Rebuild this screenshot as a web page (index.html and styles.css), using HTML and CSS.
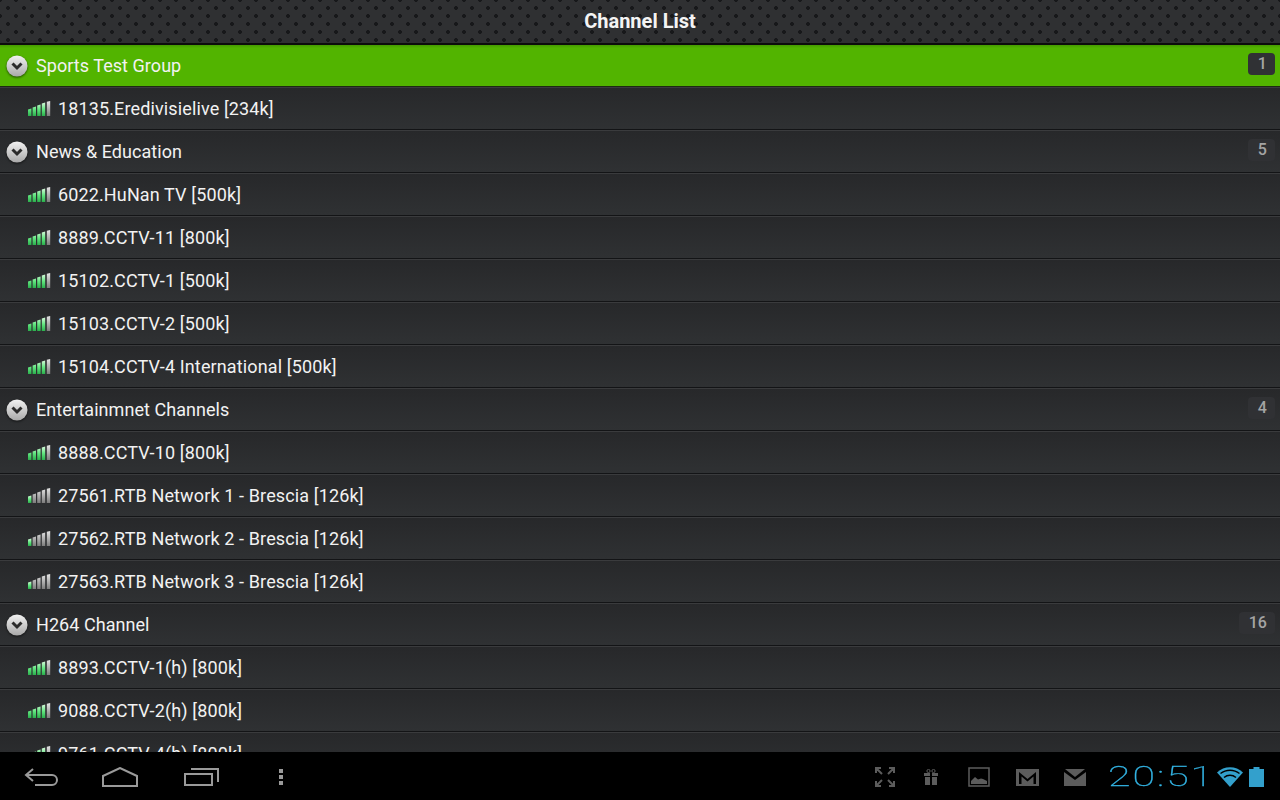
FILE: index.html
```html
<!DOCTYPE html>
<html lang="en">
<head>
  <meta charset="UTF-8" />
  <title>Channel List</title>
  <link rel="stylesheet" href="styles.css">
</head>
<body>

  <svg class="defs" width="0" height="0">
    <defs>
      <linearGradient id="barGreen" x1="0" y1="0" x2="0" y2="1">
        <stop offset="0" stop-color="#d6f7da"/>
        <stop offset="0.5" stop-color="#62e680"/>
        <stop offset="1" stop-color="#2aaf4c"/>
      </linearGradient>
      <linearGradient id="barGrey" x1="0" y1="0" x2="0" y2="1">
        <stop offset="0" stop-color="#e6e6e6"/>
        <stop offset="1" stop-color="#7c7c7c"/>
      </linearGradient>
      <linearGradient id="knob" x1="0" y1="0" x2="0" y2="1">
        <stop offset="0" stop-color="#f2f2f2"/>
        <stop offset="1" stop-color="#a9a9a9"/>
      </linearGradient>
      <symbol id="signal-good" viewBox="0 0 23 15">
        <path fill="url(#barGreen)" d="M0 8.500 3.400 7.500V15H0zM4.600 6.500 8 5.500V15H4.600zM9.200 4.500 12.600 3.500V15H9.200zM13.800 2.500 17.200 1.500V15h-3.400z"/>
        <path fill="url(#barGrey)" d="M18.800 0.700 22.200 0V15h-3.400z"/>
      </symbol>
      <symbol id="signal-poor" viewBox="0 0 23 15">
        <path fill="url(#barGreen)" d="M0 8.500 3.400 7.500V15H0z"/>
        <path fill="url(#barGrey)" d="M4.600 6.500 8 5.500V15H4.600zM9.200 4.500 12.600 3.500V15H9.200zM13.800 2.500 17.200 1.500V15h-3.400zM18.800 0.700 22.200 0V15h-3.400z"/>
      </symbol>
      <symbol id="chevron" viewBox="0 0 22 22">
        <circle cx="11" cy="11" r="10.500" fill="url(#knob)"/>
        <path d="M6.500 8.500 11 13l4.500-4.500" fill="none" stroke="#2b2b2b" stroke-width="3"/>
      </symbol>
    </defs>
  </svg>

  <div class="screen">
    <header class="titlebar">Channel List</header>

    <main class="list">
      <div class="row group active">
        <svg class="knob"><use href="#chevron"/></svg>
        <span class="name">Sports Test Group</span>
        <span class="count">1</span>
      </div>
      <div class="row"><svg class="signal"><use href="#signal-good"/></svg><span class="name">18135.Eredivisielive [234k]</span></div>

      <div class="row group">
        <svg class="knob"><use href="#chevron"/></svg>
        <span class="name">News &amp; Education</span>
        <span class="count">5</span>
      </div>
      <div class="row"><svg class="signal"><use href="#signal-good"/></svg><span class="name">6022.HuNan TV [500k]</span></div>
      <div class="row"><svg class="signal"><use href="#signal-good"/></svg><span class="name">8889.CCTV-11 [800k]</span></div>
      <div class="row"><svg class="signal"><use href="#signal-good"/></svg><span class="name">15102.CCTV-1 [500k]</span></div>
      <div class="row"><svg class="signal"><use href="#signal-good"/></svg><span class="name">15103.CCTV-2 [500k]</span></div>
      <div class="row"><svg class="signal"><use href="#signal-good"/></svg><span class="name">15104.CCTV-4 International [500k]</span></div>

      <div class="row group">
        <svg class="knob"><use href="#chevron"/></svg>
        <span class="name">Entertainmnet Channels</span>
        <span class="count">4</span>
      </div>
      <div class="row"><svg class="signal"><use href="#signal-good"/></svg><span class="name">8888.CCTV-10 [800k]</span></div>
      <div class="row"><svg class="signal"><use href="#signal-poor"/></svg><span class="name">27561.RTB Network 1 - Brescia [126k]</span></div>
      <div class="row"><svg class="signal"><use href="#signal-poor"/></svg><span class="name">27562.RTB Network 2 - Brescia [126k]</span></div>
      <div class="row"><svg class="signal"><use href="#signal-poor"/></svg><span class="name">27563.RTB Network 3 - Brescia [126k]</span></div>

      <div class="row group">
        <svg class="knob"><use href="#chevron"/></svg>
        <span class="name">H264 Channel</span>
        <span class="count">16</span>
      </div>
      <div class="row"><svg class="signal"><use href="#signal-good"/></svg><span class="name">8893.CCTV-1(h) [800k]</span></div>
      <div class="row"><svg class="signal"><use href="#signal-good"/></svg><span class="name">9088.CCTV-2(h) [800k]</span></div>
      <div class="row"><svg class="signal"><use href="#signal-good"/></svg><span class="name">9761.CCTV-4(h) [800k]</span></div>
    </main>

    <footer class="navbar">
      <div class="nav-left">
        <svg class="nav-back" width="34" height="20" viewBox="0 0 34 20"><path d="M9 2 2 8l7 6M2 8h26a4.500 4.500 0 0 1 0 10H11" fill="none" stroke="#9a9a9a" stroke-width="2"/></svg>
        <svg class="nav-home" width="36" height="20" viewBox="0 0 36 20"><path d="M1 9 18 1l17 8v10H1z" fill="none" stroke="#9a9a9a" stroke-width="2"/></svg>
        <svg class="nav-recent" width="35" height="18" viewBox="0 0 35 18"><path d="M1 6h27v11H1z" fill="none" stroke="#9a9a9a" stroke-width="2"/><path d="M7 1h27v13" fill="none" stroke="#9a9a9a" stroke-width="2"/></svg>
        <svg class="nav-menu" width="4" height="16" viewBox="0 0 4 16"><path fill="#9a9a9a" d="M0 0h4v4H0zM0 6h4v4H0zM0 12h4v4H0z"/></svg>
      </div>
      <div class="nav-right">
        <svg class="st-full" width="20" height="20" viewBox="0 0 20 20"><path d="M1 6V1h5M1 1l6 6M14 1h5v5M19 1l-6 6M1 14v5h5M1 19l6-6M14 19h5v-5M19 19l-6-6" fill="none" stroke="#5c5c5c" stroke-width="2"/></svg>
        <svg class="st-gift" width="14" height="16" viewBox="0 0 14 16"><path fill="#5c5c5c" d="M0 4h6v3H0zM8 4h6v3H8zM1 8h5v8H1zM8 8h5v8H8z"/><circle cx="4.500" cy="2" r="1.600" fill="none" stroke="#5c5c5c"/><circle cx="9.500" cy="2" r="1.600" fill="none" stroke="#5c5c5c"/></svg>
        <svg class="st-image" width="22" height="20" viewBox="0 0 22 20"><path d="M1 1h20v18H1z" fill="none" stroke="#5c5c5c" stroke-width="1.500"/><path fill="#5c5c5c" d="M3 17v-3l4-4 3 2.500 3-1 2 .5 4 2v3z"/></svg>
        <svg class="st-gmail" width="23" height="17" viewBox="0 0 23 17"><path fill="#5c5c5c" d="M0 0h23v17H0z"/><path fill="#000" d="M3 3 11.500 10 20 3v12h-2.500V7.500L11.500 12.500 5.500 7.500V15H3z"/></svg>
        <svg class="st-mail" width="22" height="17" viewBox="0 0 22 17"><path fill="#5c5c5c" d="M0 3 11 11 22 3v14H0zM1 0h20L11 8z"/></svg>
        <span class="clock-box"><span class="clock">20:51</span></span>
        <svg class="st-wifi" width="26" height="20" viewBox="0 0 26 20"><path fill="#33a0cc" d="M13 20 0 5.500C7 -1.500 19 -1.500 26 5.500z"/><path d="M3.500 6.500c5.500-4.500 13.500-4.500 19 0M7 10.500c3.500-3 8.500-3 12 0" fill="none" stroke="#000" stroke-width="1.500"/></svg>
        <svg class="st-batt" width="15" height="20" viewBox="0 0 15 20"><path fill="#33a0cc" d="M4.500 0h6v2H15v18H0V2h4.500z"/></svg>
      </div>
    </footer>
  </div>

</body>
</html>
```

FILE: styles.css
```css
* {
  box-sizing: border-box;
}
body {
  margin: 0;
  background-color: #000;
  font-family: Roboto, "Liberation Sans", sans-serif;
  color: #f2f2f2;
}
.defs {
  display: block;
  height: 0;
}
.screen {
  width: 1280px;
  height: 800px;
  display: flex;
  flex-direction: column;
  overflow: hidden;
}

.titlebar {
  height: 44px;
  flex: none;
  display: flex;
  align-items: center;
  justify-content: center;
  padding-bottom: 2px;
  background-color: #2f3032;
  background-image:
    radial-gradient(circle at 8px 8px, #17181a 1.7px, transparent 2.2px),
    radial-gradient(circle at 0 0, #17181a 1.7px, transparent 2.2px),
    radial-gradient(circle at 16px 0, #17181a 1.7px, transparent 2.2px),
    radial-gradient(circle at 0 16px, #17181a 1.7px, transparent 2.2px),
    radial-gradient(circle at 16px 16px, #17181a 1.7px, transparent 2.2px);
  background-size: 16px 16px;
  border-bottom: 1px solid #0c0c0c;
  font-size: 20px;
  font-weight: 700;
  color: #f4f4f4;
}

.list {
  flex: 1;
  min-height: 0;
  overflow: hidden;
  background-color: #2c2d2f;
}
.row {
  height: 43px;
  display: flex;
  align-items: center;
  padding-left: 28px;
  background-image: linear-gradient(#27282a, #2f3133);
  border-top: 1px solid #3a3b3d;
  border-bottom: 1px solid #131416;
  font-size: 18px;
  letter-spacing: 0.13px;
}
.row .name {
  margin-left: 7px;
}
.signal {
  width: 23px;
  height: 15px;
  flex: none;
}
.group {
  padding-left: 6px;
  padding-right: 5px;
  letter-spacing: 0.05px;
}
.group.active {
  background-image: linear-gradient(#469a00, #52b400 3px);
  border-top-color: #0c0c0c;
  border-bottom-color: #1d2a12;
}
.knob {
  width: 22px;
  height: 22px;
  flex: none;
  filter: drop-shadow(0 1px 1px rgba(0,0,0,0.6));
}
.group .name {
  margin-left: 8px;
}
.count {
  margin-left: auto;
  margin-top: -4px;
  min-width: 26px;
  height: 22px;
  padding: 0 8px 0 10px;
  display: flex;
  align-items: center;
  justify-content: center;
  border-radius: 4px;
  background-color: #303134;
  font-size: 16px;
  font-weight: 500;
  color: #a4a4a4;
}

.navbar {
  height: 48px;
  flex: none;
  display: flex;
  justify-content: space-between;
  align-items: center;
  padding-top: 2px;
  background-color: #000;
}
.nav-left,
.nav-right {
  display: flex;
  align-items: center;
}
.nav-left {
  padding-left: 24px;
}
.nav-home {
  margin-left: 44px;
}
.nav-recent {
  margin-left: 46px;
}
.nav-menu {
  margin-left: 60px;
}
.nav-right {
  padding-right: 16px;
}
.st-gift {
  margin-left: 29px;
}
.st-image {
  margin-left: 30px;
}
.st-gmail {
  margin-left: 26px;
}
.st-mail {
  margin-left: 25px;
}
.clock-box {
  width: 102px;
  margin-left: 22px;
}
.clock {
  display: inline-block;
  font-weight: 100;
  font-size: 27px;
  line-height: 27px;
  letter-spacing: 1.3px;
  color: #33b5e5;
  white-space: nowrap;
  -webkit-text-stroke: 0.3px #33b5e5;
  transform: scaleX(1.52);
  transform-origin: left center;
}
.st-wifi {
  margin-left: 7px;
}
.st-batt {
  margin-left: 6px;
}
```
